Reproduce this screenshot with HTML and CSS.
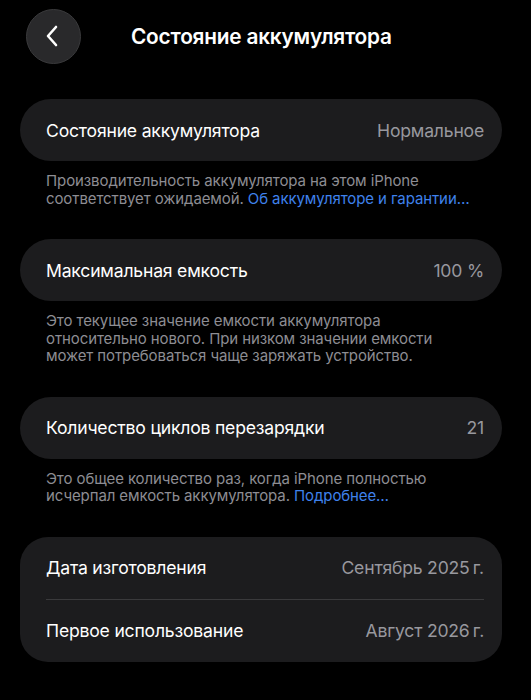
FILE: index.html
```html
<!DOCTYPE html>
<html lang="ru">
<head>
<meta charset="utf-8">
<link rel="stylesheet" href="styles.css">
</head>
<body>
<div class="screen">
  <header class="nav">
    <button class="back" aria-label="Назад">
      <svg width="14" height="22" viewBox="0 0 14 22"><path d="M11 2 L3 11 L11 20" fill="none" stroke="#fff" stroke-width="2.6" stroke-linecap="round" stroke-linejoin="round"/></svg>
    </button>
    <h1 class="title">Состояние аккумулятора</h1>
  </header>

  <section class="group">
    <div class="card pill">
      <div class="row"><span class="label">Состояние аккумулятора</span><span class="value">Нормальное</span></div>
    </div>
    <p class="note">Производительность аккумулятора на этом iPhone соответствует ожидаемой. <a class="link">Об аккумуляторе и гарантии…</a></p>
  </section>

  <section class="group">
    <div class="card pill">
      <div class="row"><span class="label">Максимальная емкость</span><span class="value">100 %</span></div>
    </div>
    <p class="note">Это текущее значение емкости аккумулятора относительно нового. При низком значении емкости может потребоваться чаще заряжать устройство.</p>
  </section>

  <section class="group">
    <div class="card pill">
      <div class="row"><span class="label">Количество циклов перезарядки</span><span class="value">21</span></div>
    </div>
    <p class="note">Это общее количество раз, когда iPhone полностью исчерпал емкость аккумулятора. <a class="link">Подробнее…</a></p>
  </section>

  <section class="group">
    <div class="card list">
      <div class="row"><span class="label">Дата изготовления</span><span class="value">Сентябрь 2025&#8239;г.</span></div>
      <div class="sep"></div>
      <div class="row"><span class="label">Первое использование</span><span class="value">Август 2026&#8239;г.</span></div>
    </div>
  </section>
</div>
</body>
</html>
```

FILE: styles.css
```css
html, body {
  margin: 0;
  padding: 0;
  background: #000;
}
body {
  font-family: Inter, "Noto Sans", "Liberation Sans", sans-serif;
  color: #fff;
  -webkit-font-smoothing: antialiased;
}
.screen {
  width: 531px;
  height: 700px;
  overflow: hidden;
}
.nav {
  display: flex;
  align-items: center;
  height: 72px;
  padding-left: 26px;
}
.back {
  width: 55px;
  height: 55px;
  border-radius: 50%;
  background: #29292b;
  border: 1px solid #3a3a3c;
  display: flex;
  align-items: center;
  justify-content: center;
  padding: 0 3px 0 0;
  margin: 0;
  box-sizing: border-box;
}
.title {
  margin: 0 0 0 50px;
  font-size: 20.8px;
  font-weight: 600;
  letter-spacing: -0.2px;
}
.group {
  margin: 0 29px 0 20px;
}
.nav + .group { margin-top: 27px; }
.card {
  background: #1c1c1e;
}
.pill {
  border-radius: 32px;
}
.list {
  border-radius: 28px;
}
.row {
  display: flex;
  justify-content: space-between;
  align-items: center;
  height: 62px;
  padding: 0 18px 0 26px;
  font-size: 17.6px;
  letter-spacing: -0.2px;
}
.value {
  color: #98989e;
}
.sep {
  height: 1px;
  background: #3a3a3c;
  margin: 0 18px 0 26px;
}
.note {
  margin: 0;
  padding: 11px 22px 32px 26px;
  font-size: 15px;
  line-height: 17.5px;
  color: #8d8d93;
  letter-spacing: -0.1px;
}
.link {
  color: #3f82ec;
  white-space: nowrap;
}
```
